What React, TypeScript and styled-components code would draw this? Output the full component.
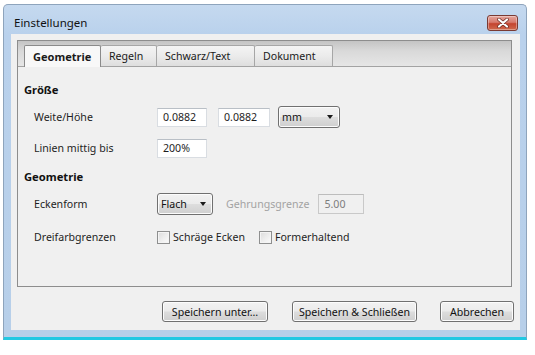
import React from 'react';
import styled, { createGlobalStyle } from 'styled-components';

const Global = createGlobalStyle`
  html, body { margin: 0; padding: 0; background: #ffffff; }
  body { font-family: "Noto Sans", "DejaVu Sans", sans-serif; font-size: 10.6px; color: #1a1a1a; }
`;

const Page = styled.div`
  padding: 4px 0 0 3px;
`;

const Window = styled.div`
  width: 524px;
  height: 336px;
  box-sizing: border-box;
  display: flex;
  flex-direction: column;
  background: linear-gradient(180deg, #c5d9ef 0px, #b9d1ec 30px, #b7cfe9 100%);
  border: 1px solid #8ea4bc;
  border-bottom: 3px solid #22c8e2;
  border-radius: 5px 5px 0 0;
`;

const TitleBar = styled.div`
  height: 29px;
  box-sizing: border-box;
  display: flex;
  align-items: center;
  justify-content: space-between;
  padding: 6px 8px 0 10px;
`;

const Title = styled.span`
  font-size: 11.5px;
  color: #111;
`;

const CloseButton = styled.div`
  width: 31px;
  height: 16px;
  box-sizing: border-box;
  border: 1px solid #7a3a33;
  border-radius: 3px;
  background: linear-gradient(180deg, #e5a59c 0%, #d77a6d 45%, #c4442f 55%, #cf6a4e 100%);
  display: flex;
  align-items: center;
  justify-content: center;
  box-shadow: inset 0 0 0 1px rgba(255, 255, 255, 0.35);
`;

const Client = styled.div`
  margin: 0 6px 0 7px;
  height: 296px;
  box-sizing: border-box;
  background: #f0f0f0;
  padding: 6px 6px 8px 6px;
  display: flex;
  flex-direction: column;
`;

const Panel = styled.div`
  margin-right: 2px;
  height: 247px;
  box-sizing: border-box;
  border: 1px solid #8d8d8d;
  box-shadow: inset 1px 1px 0 #ffffff;
  background: #f0f0f0;
  display: flex;
  flex-direction: column;
`;

const TabStrip = styled.div`
  height: 26px;
  box-sizing: border-box;
  display: flex;
  align-items: flex-end;
  padding-left: 6px;
  background: linear-gradient(180deg, #c4c4c4 0%, #d9d9d9 40%, #e6e6e6 100%);
  border-bottom: 1px solid #a3a3a3;
`;

const Tab = styled.div<{ $active?: boolean; $w: number }>`
  width: ${(p) => p.$w}px;
  height: ${(p) => (p.$active ? 22 : 21)}px;
  box-sizing: border-box;
  padding-left: 8px;
  display: flex;
  align-items: center;
  border: 1px solid ${(p) => (p.$active ? '#8a8a8a' : '#a6a6a6')};
  border-bottom: none;
  border-left-width: ${(p) => (p.$active ? 1 : 0)}px;
  border-radius: 2px 2px 0 0;
  margin-bottom: ${(p) => (p.$active ? -1 : 0)}px;
  background: ${(p) =>
    p.$active ? '#f8f8f8' : 'linear-gradient(180deg, #f4f4f4 0%, #ebebeb 50%, #dedede 100%)'};
  font-weight: ${(p) => (p.$active ? 700 : 400)};
  font-size: ${(p) => (p.$active ? 11 : 10.6)}px;
  color: #1a1a1a;
  &:first-child { border-left-width: 1px; }
`;

const Content = styled.div`
  flex: 1;
  display: flex;
  flex-direction: column;
  padding: 13px 6px 0 6px;
  background: #f0f0f0;
`;

const SectionTitle = styled.div<{ $gap: number }>`
  margin-top: ${(p) => p.$gap}px;
  height: 20px;
  line-height: 20px;
  font-weight: 700;
  font-size: 11.2px;
  color: #111;
`;

const Row = styled.div<{ $gap: number }>`
  margin-top: ${(p) => p.$gap}px;
  height: 24px;
  display: flex;
  align-items: center;
`;

const Label = styled.span`
  width: 133px;
  padding-left: 10px;
  box-sizing: border-box;
  flex-shrink: 0;
  color: #1e1e1e;
`;

const TextInput = styled.div<{ $w: number; $disabled?: boolean }>`
  width: ${(p) => p.$w}px;
  height: ${(p) => (p.$disabled ? 20 : 19)}px;
  box-sizing: border-box;
  border: 1px solid ${(p) => (p.$disabled ? '#c9c9c9' : '#d9dde2')};
  border-top-color: ${(p) => (p.$disabled ? '#bdbdbd' : '#b9bfc6')};
  background: ${(p) => (p.$disabled ? '#f0f0f0' : '#ffffff')};
  color: ${(p) => (p.$disabled ? '#7d7d7d' : '#1e1e1e')};
  padding-left: 5px;
  display: flex;
  align-items: center;
  margin-right: ${(p) => (p.$disabled ? 0 : 11)}px;
`;

const Select = styled.div<{ $w: number; $ml?: number }>`
  width: ${(p) => p.$w}px;
  height: 22px;
  margin-left: ${(p) => p.$ml ?? 0}px;
  box-sizing: border-box;
  border: 1px solid #707070;
  border-radius: 3px;
  background: linear-gradient(180deg, #f2f2f2 0%, #ebebeb 48%, #dddddd 52%, #cfcfcf 100%);
  box-shadow: inset 0 0 0 1px #fcfcfc;
  display: flex;
  align-items: center;
  justify-content: space-between;
  padding: 0 6px 0 3px;
  color: #111;
`;

const Arrow = styled.span`
  width: 0;
  height: 0;
  border-left: 3.5px solid transparent;
  border-right: 3.5px solid transparent;
  border-top: 4px solid #1a1a1a;
`;

const MutedText = styled.span`
  margin: 0 9px 0 13px;
  color: #a3a3a3;
`;

const CheckItem = styled.label<{ $mr?: number }>`
  display: flex;
  align-items: center;
  margin-right: ${(p) => p.$mr ?? 0}px;
  color: #1e1e1e;
`;

const CheckBox = styled.span`
  width: 13px;
  height: 13px;
  box-sizing: border-box;
  border: 1px solid #8e8f8f;
  background: linear-gradient(135deg, #dcdcdc 0%, #f0f0f0 60%, #fbfbfb 100%);
  box-shadow: inset 0 0 0 1px #f4f4f4;
  margin-right: 3px;
  flex-shrink: 0;
`;

const ButtonRow = styled.div`
  margin-top: 14px;
  height: 21px;
  display: flex;
  justify-content: flex-end;
`;

const Button = styled.div<{ $w: number; $ml: number }>`
  width: ${(p) => p.$w}px;
  margin-left: ${(p) => p.$ml}px;
  height: 21px;
  box-sizing: border-box;
  border: 1px solid #707070;
  border-radius: 3px;
  background: linear-gradient(180deg, #f2f2f2 0%, #ebebeb 48%, #dddddd 52%, #cfcfcf 100%);
  box-shadow: inset 0 0 0 1px #fcfcfc;
  display: flex;
  align-items: center;
  justify-content: center;
  color: #111;
`;

const CloseIcon = () => (
  <svg width="12" height="10" viewBox="0 0 12 10">
    <path d="M2 1.5 L10 8.5 M10 1.5 L2 8.5" stroke="#6b2a22" strokeWidth="3.6" strokeLinecap="round" />
    <path d="M2 1.5 L10 8.5 M10 1.5 L2 8.5" stroke="#ffffff" strokeWidth="2.2" strokeLinecap="round" />
  </svg>
);

export default function App() {
  return (
    <Page>
      <Global />
      <Window>
        <TitleBar>
          <Title>Einstellungen</Title>
          <CloseButton>
            <CloseIcon />
          </CloseButton>
        </TitleBar>
        <Client>
          <Panel>
            <TabStrip>
              <Tab $active $w={77}>Geometrie</Tab>
              <Tab $w={56}>Regeln</Tab>
              <Tab $w={98}>Schwarz/Text</Tab>
              <Tab $w={78}>Dokument</Tab>
            </TabStrip>
            <Content>
              <SectionTitle $gap={0}>Größe</SectionTitle>
              <Row $gap={5}>
                <Label>Weite/Höhe</Label>
                <TextInput $w={50}>0.0882</TextInput>
                <TextInput $w={52}>0.0882</TextInput>
                <Select $w={62} $ml={-3}>
                  mm <Arrow />
                </Select>
              </Row>
              <Row $gap={7}>
                <Label>Linien mittig bis</Label>
                <TextInput $w={50}>200%</TextInput>
              </Row>
              <SectionTitle $gap={7}>Geometrie</SectionTitle>
              <Row $gap={5}>
                <Label>Eckenform</Label>
                <Select $w={56}>
                  Flach <Arrow />
                </Select>
                <MutedText>Gehrungsgrenze</MutedText>
                <TextInput $w={46} $disabled>5.00</TextInput>
              </Row>
              <Row $gap={9}>
                <Label>Dreifarbgrenzen</Label>
                <CheckItem $mr={14}>
                  <CheckBox />
                  Schräge Ecken
                </CheckItem>
                <CheckItem>
                  <CheckBox />
                  Formerhaltend
                </CheckItem>
              </Row>
            </Content>
          </Panel>
          <ButtonRow>
            <Button $w={106} $ml={0}>Speichern unter…</Button>
            <Button $w={125} $ml={24}>Speichern &amp; Schließen</Button>
            <Button $w={74} $ml={23}>Abbrechen</Button>
          </ButtonRow>
        </Client>
      </Window>
    </Page>
  );
}
